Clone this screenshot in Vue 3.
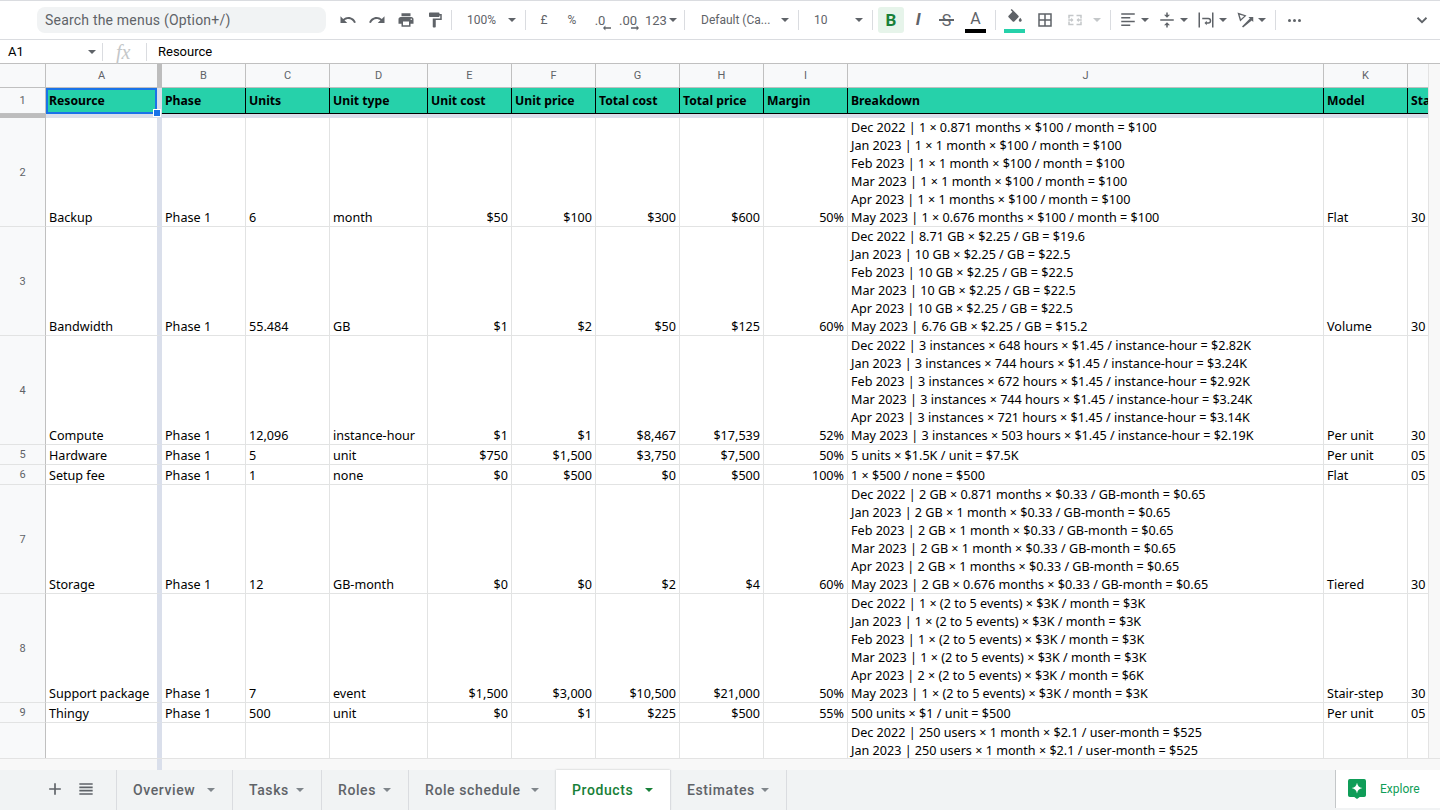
<template>
  <div class="sheet">
    <!-- Toolbar -->
    <div class="toolbar">
      <div class="search">Search the menus (Option+/)</div>
      <div class="group g-history">
        <span class="slot"><svg viewBox="0 0 24 24"><path :d="icons.undo" /></svg></span>
        <span class="slot"><svg viewBox="0 0 24 24"><path :d="icons.redo" /></svg></span>
        <span class="slot"><svg viewBox="0 0 24 24"><path :d="icons.print" /></svg></span>
        <span class="slot"><svg viewBox="0 0 24 24"><path :d="icons.paint" /></svg></span>
      </div>
      <i class="sep" />
      <div class="group g-select g-zoom">
        <span class="label">100%</span>
        <i class="caret" />
      </div>
      <i class="sep" />
      <div class="group g-format">
        <span class="slot narrow label">£</span>
        <span class="slot narrow label">%</span>
        <span class="slot narrow label decimal">.0<svg viewBox="0 0 10 6"><path d="M0 3l3-3v2h7v2H3v2z" /></svg></span>
        <span class="slot narrow label decimal">.00<svg viewBox="0 0 10 6"><path d="M10 3L7 0v2H0v2h7v2z" /></svg></span>
        <span class="label num">123</span>
        <i class="caret" />
      </div>
      <i class="sep" />
      <div class="group g-select g-font">
        <span class="label">Default (Ca...</span>
        <i class="caret" />
      </div>
      <i class="sep" />
      <div class="group g-select g-size">
        <span class="label">10</span>
        <i class="caret" />
      </div>
      <i class="sep" />
      <div class="group g-text">
        <span class="bold">B</span>
        <span class="slot narrow italic">I</span>
        <span class="slot strike">S<i /></span>
        <span class="slot color">A<i /></span>
      </div>
      <i class="sep" />
      <div class="group g-cell">
        <span class="slot narrow fill">
          <svg viewBox="0 0 24 24"><path :d="icons.fill" /></svg>
          <i />
        </span>
        <span class="slot narrow"><svg viewBox="0 0 24 24"><path :d="icons.borders" /></svg></span>
        <span class="slot narrow off"><svg viewBox="0 0 24 24"><path :d="icons.merge" /></svg></span>
        <i class="caret off" />
      </div>
      <i class="sep" />
      <div class="group g-align">
        <div v-for="name in ['align', 'valign', 'wrap', 'rotate']" :key="name" class="pair">
          <span class="slot tiny"><svg viewBox="0 0 24 24"><path :d="icons[name]" /></svg></span>
          <i class="caret" />
        </div>
      </div>
      <i class="sep" />
      <div class="group g-more">
        <span class="dot" /><span class="dot" /><span class="dot" />
      </div>
      <svg class="collapse" viewBox="0 0 24 24"><path d="M6 9l6 6 6-6" /></svg>
    </div>

    <!-- Formula bar -->
    <div class="formula">
      <div class="name-box">A1<i class="caret" /></div>
      <div class="fx">fx</div>
      <div class="value">Resource</div>
    </div>

    <div class="main">
      <div class="grid-area">
        <div class="grid-clip">
          <!-- Column letters -->
          <div class="row letters">
            <div class="corner" />
            <div v-for="(l, i) in letters" :key="i" class="letter" :class="{ frozen: i === 0 }">{{ l }}</div>
          </div>

          <!-- Frozen header row -->
          <div class="row head-row">
            <div class="row-num">1</div>
            <div v-for="(h, i) in headers" :key="h" class="head-cell" :class="{ frozen: i === 0, selected: i === 0 }">
              {{ h }}
              <span v-if="i === 0" class="handle" />
            </div>
          </div>
          <div class="freeze-bar"><span /></div>

          <!-- Data rows -->
          <div class="body">
            <div v-for="(r, n) in rows" :key="n" class="row data-row" :class="{ last: n === rows.length - 1 }">
              <div class="row-num">{{ n < 8 ? n + 2 : "" }}</div>
              <div
                v-for="(c, i) in rowCells(r)"
                :key="i"
                class="cell"
                :class="{ frozen: i === 0, right: i >= 4 && i <= 8 }"
              >
                <div class="text">
                  <template v-if="i === 9"><div v-for="line in c" :key="line">{{ line }}</div></template>
                  <template v-else>{{ c }}</template>
                </div>
              </div>
            </div>
          </div>
        </div>
        <div class="v-scroll" />
      </div>
      <div class="h-scroll"><span /><span class="h-freeze" /></div>
    </div>

    <!-- Sheet tabs -->
    <div class="tabs">
      <div class="tab-tools">
        <svg viewBox="0 0 24 24"><path d="M19 13h-6v6h-2v-6H5v-2h6V5h2v6h6v2z" /></svg>
        <svg viewBox="0 0 24 24"><path d="M4 5h16v2H4zM4 9h16v2H4zM4 13h16v2H4zM4 17h16v2H4z" /></svg>
      </div>
      <div
        v-for="t in tabs"
        :key="t.name"
        class="tab"
        :class="{ active: t.name === 'Products' }"
        :style="{ width: t.width + 'px' }"
      >
        {{ t.name }}<i class="caret" />
      </div>
      <div class="explore">
        <svg viewBox="0 0 20 22">
          <path d="M2 0h16a2 2 0 0 1 2 2v16a2 2 0 0 1-2 2h-5l-3 2-3-2H2a2 2 0 0 1-2-2V2a2 2 0 0 1 2-2z" fill="#0f9d58" />
          <path d="M10 4c.7 3.6 2.4 5.3 6 6-3.6.7-5.3 2.4-6 6-.7-3.6-2.4-5.3-6-6 3.6-.7 5.3-2.4 6-6z" fill="#fff" />
        </svg>
        <span>Explore</span>
      </div>
    </div>
  </div>
</template>

<script setup>
const icons = {
  undo: "M12.5 8c-2.65 0-5.05.99-6.9 2.6L2 7v9h9l-3.62-3.62c1.39-1.16 3.16-1.88 5.12-1.88 3.54 0 6.55 2.31 7.6 5.5l2.37-.78C21.08 11.03 17.15 8 12.5 8z",
  redo: "M18.4 10.6C16.55 8.99 14.15 8 11.5 8c-4.65 0-8.58 3.03-9.96 7.22L3.9 16c1.05-3.19 4.05-5.5 7.6-5.5 1.95 0 3.73.72 5.12 1.88L13 16h9V7l-3.6 3.6z",
  print: "M19 8H5c-1.66 0-3 1.34-3 3v6h4v4h12v-4h4v-6c0-1.66-1.34-3-3-3zm-3 11H8v-5h8v5zm3-7c-.55 0-1-.45-1-1s.45-1 1-1 1 .45 1 1-.45 1-1 1zm-1-9H6v4h12V3z",
  paint: "M18 4V3c0-.55-.45-1-1-1H5c-.55 0-1 .45-1 1v4c0 .55.45 1 1 1h12c.55 0 1-.45 1-1V6h1v4H9v11c0 .55.45 1 1 1h2c.55 0 1-.45 1-1v-9h8V4h-3z",
  fill: "M16.56 8.94L7.62 0 6.21 1.41l2.38 2.38-5.15 5.15c-.59.59-.59 1.54 0 2.12l5.5 5.5c.29.29.68.44 1.06.44s.77-.15 1.06-.44l5.5-5.5c.59-.58.59-1.53 0-2.12zM19 11.5s-2 2.17-2 3.5c0 1.1.9 2 2 2s2-.9 2-2c0-1.33-2-3.5-2-3.5z",
  borders: "M3 3v18h18V3H3zm8 16H5v-6h6v6zm0-8H5V5h6v6zm8 8h-6v-6h6v6zm0-8h-6V5h6v6z",
  merge: "M3 5h7v2H5v3H3zM14 5h7v5h-2V7h-5zM3 14h2v3h5v2H3zM19 14h2v5h-7v-2h5zM3 11h4V9l3 3-3 3v-2H3zM21 13h-4v2l-3-3 3-3v2h4z",
  align: "M3 3h18v2H3zM3 8h12v2H3zM3 13h18v2H3zM3 18h12v2H3z",
  valign: "M3 11h18v2H3zM11 2h2v3h3l-4 4-4-4h3zM13 22h-2v-3H8l4-4 4 4h-3z",
  wrap: "M2 2h2v20H2zM20 2h2v20h-2zM7 9h8a4 4 0 0 1 0 8h-2v2l-3-3 3-3v2h2a2 2 0 0 0 0-4H7z",
  rotate: "M2 2l12 4-8.5 8zM4.8 5l1.7 5.6L11 6.8zM8 20.5L18.5 10l-2-2H23v6.5l-2-2L9.5 22z",
};

const letters = ["A", "B", "C", "D", "E", "F", "G", "H", "I", "J", "K", ""];
const headers = [
  "Resource", "Phase", "Units", "Unit type", "Unit cost", "Unit price",
  "Total cost", "Total price", "Margin", "Breakdown", "Model", "Start date",
];

const rows = [
  {
    cells: ["Backup", "Phase 1", "6", "month", "$50", "$100", "$300", "$600", "50%"],
    breakdown: [
      "Dec 2022 | 1 × 0.871 months × $100 / month = $100",
      "Jan 2023 | 1 × 1 month × $100 / month = $100",
      "Feb 2023 | 1 × 1 month × $100 / month = $100",
      "Mar 2023 | 1 × 1 month × $100 / month = $100",
      "Apr 2023 | 1 × 1 months × $100 / month = $100",
      "May 2023 | 1 × 0.676 months × $100 / month = $100",
    ],
    model: "Flat",
    start: "30 Nov 2022",
  },
  {
    cells: ["Bandwidth", "Phase 1", "55.484", "GB", "$1", "$2", "$50", "$125", "60%"],
    breakdown: [
      "Dec 2022 | 8.71 GB × $2.25 / GB = $19.6",
      "Jan 2023 | 10 GB × $2.25 / GB = $22.5",
      "Feb 2023 | 10 GB × $2.25 / GB = $22.5",
      "Mar 2023 | 10 GB × $2.25 / GB = $22.5",
      "Apr 2023 | 10 GB × $2.25 / GB = $22.5",
      "May 2023 | 6.76 GB × $2.25 / GB = $15.2",
    ],
    model: "Volume",
    start: "30 Nov 2022",
  },
  {
    cells: ["Compute", "Phase 1", "12,096", "instance-hour", "$1", "$1", "$8,467", "$17,539", "52%"],
    breakdown: [
      "Dec 2022 | 3 instances × 648 hours × $1.45 / instance-hour = $2.82K",
      "Jan 2023 | 3 instances × 744 hours × $1.45 / instance-hour = $3.24K",
      "Feb 2023 | 3 instances × 672 hours × $1.45 / instance-hour = $2.92K",
      "Mar 2023 | 3 instances × 744 hours × $1.45 / instance-hour = $3.24K",
      "Apr 2023 | 3 instances × 721 hours × $1.45 / instance-hour = $3.14K",
      "May 2023 | 3 instances × 503 hours × $1.45 / instance-hour = $2.19K",
    ],
    model: "Per unit",
    start: "30 Nov 2022",
  },
  {
    cells: ["Hardware", "Phase 1", "5", "unit", "$750", "$1,500", "$3,750", "$7,500", "50%"],
    breakdown: ["5 units × $1.5K / unit = $7.5K"],
    model: "Per unit",
    start: "05 Dec 2022",
  },
  {
    cells: ["Setup fee", "Phase 1", "1", "none", "$0", "$500", "$0", "$500", "100%"],
    breakdown: ["1 × $500 / none = $500"],
    model: "Flat",
    start: "05 Dec 2022",
  },
  {
    cells: ["Storage", "Phase 1", "12", "GB-month", "$0", "$0", "$2", "$4", "60%"],
    breakdown: [
      "Dec 2022 | 2 GB × 0.871 months × $0.33 / GB-month = $0.65",
      "Jan 2023 | 2 GB × 1 month × $0.33 / GB-month = $0.65",
      "Feb 2023 | 2 GB × 1 month × $0.33 / GB-month = $0.65",
      "Mar 2023 | 2 GB × 1 month × $0.33 / GB-month = $0.65",
      "Apr 2023 | 2 GB × 1 months × $0.33 / GB-month = $0.65",
      "May 2023 | 2 GB × 0.676 months × $0.33 / GB-month = $0.65",
    ],
    model: "Tiered",
    start: "30 Nov 2022",
  },
  {
    cells: ["Support package", "Phase 1", "7", "event", "$1,500", "$3,000", "$10,500", "$21,000", "50%"],
    breakdown: [
      "Dec 2022 | 1 × (2 to 5 events) × $3K / month = $3K",
      "Jan 2023 | 1 × (2 to 5 events) × $3K / month = $3K",
      "Feb 2023 | 1 × (2 to 5 events) × $3K / month = $3K",
      "Mar 2023 | 1 × (2 to 5 events) × $3K / month = $3K",
      "Apr 2023 | 2 × (2 to 5 events) × $3K / month = $6K",
      "May 2023 | 1 × (2 to 5 events) × $3K / month = $3K",
    ],
    model: "Stair-step",
    start: "30 Nov 2022",
  },
  {
    cells: ["Thingy", "Phase 1", "500", "unit", "$0", "$1", "$225", "$500", "55%"],
    breakdown: ["500 units × $1 / unit = $500"],
    model: "Per unit",
    start: "05 Dec 2022",
  },
  {
    cells: ["", "", "", "", "", "", "", "", ""],
    breakdown: [
      "Dec 2022 | 250 users × 1 month × $2.1 / user-month = $525",
      "Jan 2023 | 250 users × 1 month × $2.1 / user-month = $525",
    ],
    model: "",
    start: "",
  },
];

const tabs = [
  { name: "Overview", width: 116 },
  { name: "Tasks", width: 89 },
  { name: "Roles", width: 87 },
  { name: "Role schedule", width: 148 },
  { name: "Products", width: 114 },
  { name: "Estimates", width: 117 },
];

function rowCells(r) {
  return [...r.cells, r.breakdown, r.model, r.start];
}
</script>

<style>
html,
body {
  margin: 0;
  overflow: hidden;
}
</style>

<style scoped>
.sheet {
  width: 1440px;
  height: 810px;
  display: flex;
  flex-direction: column;
  overflow: hidden;
  background: #fff;
  font-family: Roboto, "Liberation Sans", sans-serif;
  color: #000;
}

.caret {
  display: block;
  flex: none;
  width: 0;
  height: 0;
  border-left: 4px solid transparent;
  border-right: 4px solid transparent;
  border-top: 4px solid #5f6368;
}

.caret.off {
  border-top-color: #c4c7c9;
}

/* toolbar */
.toolbar {
  height: 38px;
  flex: none;
  display: flex;
  align-items: center;
  border-top: 1px solid #dadce0;
  border-bottom: 1px solid #dadce0;
  padding-left: 37px;
}

.search {
  width: 281px;
  height: 26px;
  line-height: 26px;
  margin-right: 7px;
  padding-left: 8px;
  border-radius: 8px;
  background: #f1f3f4;
  color: #5f6368;
  font-size: 14px;
  letter-spacing: 0.2px;
}

.group {
  display: flex;
  align-items: center;
  height: 100%;
  box-sizing: border-box;
  flex: none;
}

.sep {
  display: block;
  flex: none;
  width: 1px;
  height: 20px;
  background: #dadce0;
}

.slot {
  flex: none;
  width: 29px;
  height: 26px;
  display: flex;
  align-items: center;
  justify-content: center;
  color: #5f6368;
}

.slot.narrow {
  width: 28px;
}

.slot.tiny {
  width: 24px;
}

.slot svg {
  width: 18px;
  height: 18px;
  fill: #5f6368;
}

.slot.off svg {
  fill: #c4c7c9;
}

.label {
  color: #5f6368;
  font-size: 12px;
  white-space: nowrap;
}

.g-history {
  width: 118px;
}

.g-select {
  justify-content: space-between;
  padding-right: 9px;
}

.g-zoom {
  width: 73px;
  padding-left: 15px;
}

.g-format {
  width: 158px;
  padding-left: 4px;
}

.g-font {
  width: 113px;
  padding-left: 16px;
}

.g-size {
  width: 73px;
  padding-left: 15px;
}

.decimal {
  position: relative;
  font-size: 13px;
}

.decimal svg {
  position: absolute;
  right: 3px;
  bottom: 2px;
  width: 8px;
  height: 6px;
}

.num {
  margin-left: 3px;
  margin-right: 2px;
  font-size: 13px;
}

.g-text {
  width: 122px;
  padding-left: 5px;
}

.bold {
  width: 26px;
  height: 26px;
  line-height: 26px;
  border-radius: 3px;
  background: #e6f4ea;
  color: #188038;
  font-size: 17px;
  font-weight: 700;
  text-align: center;
}

.italic {
  font-family: "Liberation Sans", sans-serif;
  font-style: italic;
  font-weight: 700;
  font-size: 17px;
}

.strike {
  position: relative;
  font-size: 16px;
}

.strike i {
  position: absolute;
  left: 7px;
  right: 7px;
  top: 12px;
  height: 2px;
  background: #5f6368;
}

.color {
  position: relative;
  font-size: 16px;
  padding-bottom: 4px;
  box-sizing: border-box;
}

.color i {
  position: absolute;
  left: 4px;
  bottom: 0;
  width: 21px;
  height: 4px;
  background: #000;
}

.g-cell {
  width: 114px;
  padding-left: 5px;
  gap: 2px;
}

.fill {
  position: relative;
}

.fill svg {
  margin-top: -5px;
}

.fill i {
  position: absolute;
  left: 3px;
  bottom: 0;
  width: 21px;
  height: 4px;
  background: #26d1aa;
}

.g-cell .caret {
  margin-left: 2px;
}

.g-align {
  width: 164px;
  padding-left: 5px;
}

.pair {
  width: 39px;
  flex: none;
  display: flex;
  align-items: center;
}

.pair .caret {
  margin-left: 1px;
}

.g-more {
  padding-left: 12px;
  gap: 2px;
}

.dot {
  width: 3px;
  height: 3px;
  border-radius: 50%;
  background: #5f6368;
}

.collapse {
  margin-left: auto;
  margin-right: 9px;
  width: 18px;
  height: 18px;
  fill: none;
  stroke: #5f6368;
  stroke-width: 2.4;
}

/* formula bar */
.formula {
  height: 23px;
  flex: none;
  display: flex;
  align-items: center;
  border-bottom: 1px solid #c0c0c0;
  font-size: 13px;
}

.name-box {
  width: 103px;
  height: 18px;
  box-sizing: border-box;
  padding: 0 6px 0 8px;
  display: flex;
  align-items: center;
  justify-content: space-between;
  border-right: 1px solid #dadce0;
}

.fx {
  width: 44px;
  height: 18px;
  box-sizing: border-box;
  padding-left: 13px;
  line-height: 18px;
  border-right: 1px solid #dadce0;
  font-family: "Liberation Serif", serif;
  font-style: italic;
  font-size: 20px;
  color: #c4c7c9;
}

.value {
  padding-left: 11px;
}

/* grid */
.main {
  flex: 1;
  min-height: 0;
  display: flex;
  flex-direction: column;
}

.grid-area {
  flex: 1;
  min-height: 0;
  display: flex;
}

.grid-clip {
  width: 1428px;
  height: 100%;
  display: flex;
  flex-direction: column;
  overflow: hidden;
}

.v-scroll {
  flex: 1;
  background: #f8f8f8;
  border-left: 1px solid #e3e3e3;
}

.row {
  display: grid;
  grid-template-columns: 46px 116px 84px 84px 98px 84px 84px 84px 84px 84px 476px 84px 84px;
  flex: none;
  width: 1530px;
}

.letters {
  height: 24px;
  box-sizing: border-box;
  background: #f8f9fa;
  border-bottom: 1px solid #c0c0c0;
  color: #5f6368;
  font-size: 11px;
}

.corner {
  border-right: 1px solid #c0c0c0;
}

.letter {
  display: flex;
  align-items: center;
  justify-content: center;
  border-right: 1px solid #c0c0c0;
}

.letter.frozen {
  border-right: 5px solid #bdbdbd;
}

.head-row {
  height: 26px;
  box-sizing: border-box;
}

.row-num {
  display: flex;
  align-items: center;
  justify-content: center;
  background: #f8f9fa;
  border-right: 1px solid #c0c0c0;
  border-bottom: 1px solid #e2e3e3;
  color: #5f6368;
  font-size: 11px;
}

.head-row .row-num {
  border-bottom: 1px solid #c0c0c0;
}

.head-cell {
  position: relative;
  display: flex;
  align-items: center;
  padding-left: 3px;
  background: #26d1aa;
  border-right: 1px solid #000;
  border-bottom: 1px solid #000;
  font-family: "Noto Sans", sans-serif;
  font-size: 12.2px;
  font-weight: 700;
  white-space: nowrap;
  overflow: hidden;
}

.head-cell.frozen {
  border-right: 5px solid #dadfeb;
  overflow: visible;
}

.head-cell.selected::before {
  content: "";
  position: absolute;
  left: 0;
  top: 0;
  right: 0;
  bottom: -1px;
  border: 2px solid #1a73e8;
  pointer-events: none;
}

.handle {
  position: absolute;
  right: -4px;
  bottom: -4px;
  width: 6px;
  height: 6px;
  background: #1a73e8;
  border: 1px solid #fff;
  z-index: 2;
}

.freeze-bar {
  height: 4px;
  flex: none;
  background: #dadfeb;
}

.freeze-bar span {
  display: block;
  width: 46px;
  height: 100%;
  background: #bdbdbd;
}

.body {
  flex: 1;
  min-height: 0;
  overflow: hidden;
}

.data-row {
  min-height: 20px;
  box-sizing: border-box;
}

.cell {
  display: flex;
  align-items: flex-end;
  box-sizing: border-box;
  padding: 0 0 0 3px;
  border-right: 1px solid #e2e3e3;
  border-bottom: 1px solid #e2e3e3;
  font-family: "Noto Sans", sans-serif;
  font-size: 12.6px;
  line-height: 18px;
  white-space: nowrap;
  overflow: hidden;
}

.text {
  transform: translateY(1px);
}

.cell.frozen {
  border-right: 5px solid #dadfeb;
}

.cell.right {
  justify-content: flex-end;
  padding: 0 3px 0 0;
}

.last .cell {
  align-items: flex-start;
}

.h-scroll {
  height: 12px;
  flex: none;
  display: flex;
  background: #f8f8f8;
  border-top: 1px solid #e3e3e3;
  box-sizing: border-box;
}

.h-scroll span {
  width: 157px;
}

.h-scroll .h-freeze {
  width: 5px;
  background: #dadfeb;
}

/* tabs */
.tabs {
  height: 40px;
  flex: none;
  display: flex;
  background: #f1f3f4;
}

.tab-tools {
  width: 116px;
  flex: none;
  display: flex;
  align-items: center;
  padding: 0 0 2px 45px;
  box-sizing: border-box;
  gap: 11px;
}

.tab-tools svg {
  width: 20px;
  height: 20px;
  fill: #5f6368;
}

.tab {
  flex: none;
  display: flex;
  align-items: center;
  justify-content: space-between;
  height: 100%;
  box-sizing: border-box;
  padding: 0 17px 0 16px;
  border-left: 1px solid #dadce0;
  color: #5f6368;
  font-size: 14px;
  font-weight: 500;
  letter-spacing: 0.6px;
  white-space: nowrap;
}

.tab:nth-last-of-type(2) {
  border-right: 1px solid #dadce0;
}

.tab .caret {
  border-top-color: #80868b;
}

.tab.active {
  background: #fff;
  color: #188038;
  border-left: none;
  box-shadow: 0 0 2px rgba(60, 64, 67, 0.3);
}

.tab.active .caret {
  border-top-color: #188038;
}

.explore {
  margin-left: auto;
  width: 105px;
  height: 38px;
  box-sizing: border-box;
  display: flex;
  align-items: center;
  gap: 14px;
  padding-left: 12px;
  background: #fff;
  border-left: 1px solid #c4c7c9;
  color: #0f9d58;
  font-size: 12px;
}

.explore svg {
  width: 18px;
  height: 20px;
}
</style>
